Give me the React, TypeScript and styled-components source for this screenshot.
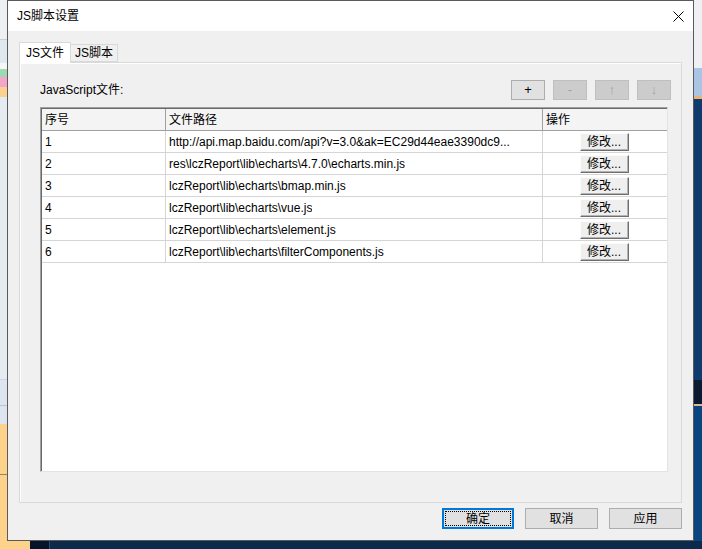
import styled, { createGlobalStyle } from 'styled-components';

const GlobalStyle = createGlobalStyle`
  html, body {
    margin: 0;
    padding: 0;
  }
  body {
    width: 702px;
    height: 549px;
    overflow: hidden;
    font-family: "Liberation Sans", "Noto Sans CJK SC", sans-serif;
    font-size: 12px;
    color: #000;
  }
  * { box-sizing: border-box; }
`;

const Desktop = styled.div`
  width: 702px;
  height: 549px;
  display: flex;
  flex-direction: column;
  overflow: hidden;
`;

const TopRow = styled.div`
  display: flex;
  height: 541px;
`;

const Strip = styled.div<{ $w: number }>`
  width: ${p => p.$w}px;
  display: flex;
  flex-direction: column;
  flex-shrink: 0;
`;

const Band = styled.div<{ $h?: number; $bg: string; $line?: string }>`
  ${p => (p.$h ? `height: ${p.$h}px;` : 'flex: 1;')}
  background: ${p => p.$bg};
  ${p => (p.$line ? `border-bottom: 1px solid ${p.$line};` : '')}
`;

const BottomStrip = styled.div`
  height: 8px;
  display: flex;
`;

const BottomBand = styled.div<{ $w?: number; $bg: string }>`
  ${p => (p.$w ? `width: ${p.$w}px;` : 'flex: 1;')}
  background: ${p => p.$bg};
`;

const Dialog = styled.div`
  width: 687px;
  height: 541px;
  border: 1px solid #5a5a5a;
  background: #f0f0f0;
  display: flex;
  flex-direction: column;
`;

const TitleBar = styled.div`
  height: 30px;
  background: #fff;
  display: flex;
  align-items: center;
  justify-content: space-between;
  padding: 0 9px 0 9px;
`;

const Title = styled.span`
  font-size: 12px;
  line-height: 16px;
  padding-bottom: 1px;
`;

const Body = styled.div`
  flex: 1;
  display: flex;
  flex-direction: column;
  padding: 11px;
`;

const TabStrip = styled.div`
  display: flex;
  align-items: flex-end;
  height: 20px;
  position: relative;
  z-index: 1;
`;

const Tab = styled.div<{ $active?: boolean }>`
  height: ${p => (p.$active ? 21 : 18)}px;
  margin-bottom: ${p => (p.$active ? -1 : 0)}px;
  padding: 0 ${p => (p.$active ? 6 : 4)}px;
  background: ${p => (p.$active ? '#fff' : '#f0f0f0')};
  border: 1px solid #d9d9d9;
  border-bottom: ${p => (p.$active ? 'none' : '1px solid #d9d9d9')};
  ${p => (p.$active ? '' : 'margin-left: -1px;')}
  display: flex;
  align-items: center;
  line-height: 16px;
`;

const Panel = styled.div`
  flex: 1;
  border: 1px solid #d9d9d9;
  box-shadow: inset 1px 1px 0 #fff;
  display: flex;
  flex-direction: column;
  padding: 17px 13px 30px 20px;
`;

const ToolRow = styled.div`
  height: 20px;
  display: flex;
  align-items: center;
  justify-content: space-between;
  margin-right: -3px;
`;

const Label = styled.span`
  line-height: 16px;
`;

const ToolGroup = styled.div`
  display: flex;
  gap: 8px;
`;

const ToolButton = styled.button<{ $disabled?: boolean }>`
  width: 34px;
  height: 20px;
  padding: 0;
  font: inherit;
  font-size: 13px;
  line-height: 16px;
  background: ${p => (p.$disabled ? '#cccccc' : '#e1e1e1')};
  border: 1px solid ${p => (p.$disabled ? '#bfbfbf' : '#adadad')};
  color: ${p => (p.$disabled ? '#a3a3a3' : '#000')};
`;

const Table = styled.div`
  flex: 1;
  margin-top: 7px;
  background: #fff;
  border: 1px solid;
  border-color: #a0a0a0 #e3e3e3 #e3e3e3 #a0a0a0;
  box-shadow: inset 1px 1px 0 #696969;
  padding: 1px 0 0 1px;
  display: flex;
  flex-direction: column;
`;

const Row = styled.div<{ $head?: boolean }>`
  display: grid;
  grid-template-columns: 124px 377px 1fr;
  height: 22px;
  background: ${p => (p.$head ? '#f4f4f4' : '#fff')};
  border-bottom: 1px solid ${p => (p.$head ? '#a0a0a0' : '#d5d5d5')};
`;

const Cell = styled.div<{ $head?: boolean; $center?: boolean }>`
  display: flex;
  align-items: center;
  justify-content: ${p => (p.$center ? 'center' : 'flex-start')};
  padding-left: ${p => (p.$center ? 0 : 3)}px;
  border-right: 1px solid ${p => (p.$head ? '#a0a0a0' : '#d5d5d5')};
  white-space: nowrap;
  overflow: hidden;
  line-height: 16px;
  &:last-child { border-right: none; }
`;

const CellText = styled.span`
  overflow: hidden;
  text-overflow: ellipsis;
`;

const EditButton = styled.button`
  width: 49px;
  height: 18px;
  margin-left: -2px;
  padding: 0;
  font: inherit;
  font-size: 12px;
  line-height: 14px;
  background: #efefef;
  border: 1px solid;
  border-color: #fcfcfc #6e6e6e #6e6e6e #fcfcfc;
  box-shadow: inset -1px -1px 0 #b4b4b4;
  color: #000;
`;

const Footer = styled.div`
  display: flex;
  justify-content: flex-end;
  gap: 11px;
  margin-top: 5px;
`;

const DialogButton = styled.button<{ $primary?: boolean }>`
  position: relative;
  width: ${p => (p.$primary ? 72 : 73)}px;
  height: 21px;
  padding: 0;
  font: inherit;
  font-size: 12px;
  line-height: 16px;
  color: #000;
  background: #e1e1e1;
  border: ${p => (p.$primary ? '2px solid #0078d7' : '1px solid #adadad')};
  &::after {
    content: '';
    display: ${p => (p.$primary ? 'block' : 'none')};
    position: absolute;
    inset: 1px;
    border: 1px dotted #000;
  }
`;

const CloseIcon = () => (
  <svg width="11" height="11" viewBox="0 0 11 11">
    <path d="M0.5 0.5 L10.5 10.5 M10.5 0.5 L0.5 10.5" stroke="#000" strokeWidth="1" />
  </svg>
);

const files = [
  'http://api.map.baidu.com/api?v=3.0&ak=EC29d44eae3390dc9...',
  'res\\lczReport\\lib\\echarts\\4.7.0\\echarts.min.js',
  'lczReport\\lib\\echarts\\bmap.min.js',
  'lczReport\\lib\\echarts\\vue.js',
  'lczReport\\lib\\echarts\\element.js',
  'lczReport\\lib\\echarts\\filterComponents.js',
];

const App = () => {
  return (
    <Desktop>
      <GlobalStyle />
      <TopRow>
        <Strip $w={7}>
          <Band $h={40} $bg="#eef0f3" $line="#c9d0da" />
          <Band $h={23} $bg="#dfe7f1" />
          <Band $h={6} $bg="#f4f6f9" />
          <Band $h={8} $bg="#9fd9b4" />
          <Band $h={10} $bg="#f3a6c8" />
          <Band $h={10} $bg="#fbd28f" />
          <Band $h={283} $bg="#e6ebf2" $line="#cdd5df" />
          <Band $h={26} $bg="#dde6f0" $line="#b8c4d2" />
          <Band $h={18} $bg="#dde6f0" />
          <Band $h={51} $bg="#fdd28b" $line="#9a8460" />
          <Band $bg="#fdd28b" />
        </Strip>
        <Dialog>
          <TitleBar>
            <Title>JS脚本设置</Title>
            <CloseIcon />
          </TitleBar>
          <Body>
            <TabStrip>
              <Tab $active>JS文件</Tab>
              <Tab>JS脚本</Tab>
            </TabStrip>
            <Panel>
              <ToolRow>
                <Label>JavaScript文件:</Label>
                <ToolGroup>
                  <ToolButton>+</ToolButton>
                  <ToolButton $disabled>-</ToolButton>
                  <ToolButton $disabled>↑</ToolButton>
                  <ToolButton $disabled>↓</ToolButton>
                </ToolGroup>
              </ToolRow>
              <Table>
                <Row $head>
                  <Cell $head>序号</Cell>
                  <Cell $head>文件路径</Cell>
                  <Cell $head>操作</Cell>
                </Row>
                {files.map((f, i) => (
                  <Row key={f}>
                    <Cell>{i + 1}</Cell>
                    <Cell><CellText>{f}</CellText></Cell>
                    <Cell $center><EditButton>修改...</EditButton></Cell>
                  </Row>
                ))}
              </Table>
            </Panel>
            <Footer>
              <DialogButton $primary>确定</DialogButton>
              <DialogButton>取消</DialogButton>
              <DialogButton>应用</DialogButton>
            </Footer>
          </Body>
        </Dialog>
        <Strip $w={8}>
          <Band $h={68} $bg="#eef0f3" />
          <Band $h={28} $bg="#a9c5e3" />
          <Band $h={3} $bg="#e8b476" />
          <Band $h={281} $bg="#0f3c6c" />
          <Band $h={24} $bg="#0a1a30" />
          <Band $h={2} $bg="#d9bb94" />
          <Band $bg="#0b4580" />
        </Strip>
      </TopRow>
      <BottomStrip>
        <BottomBand $w={30} $bg="#fdd28b" />
        <BottomBand $w={19} $bg="#06142a" />
        <BottomBand $w={1} $bg="#2a4a6a" />
        <BottomBand $bg="#0c2a4c" />
      </BottomStrip>
    </Desktop>
  );
};

export default App;
